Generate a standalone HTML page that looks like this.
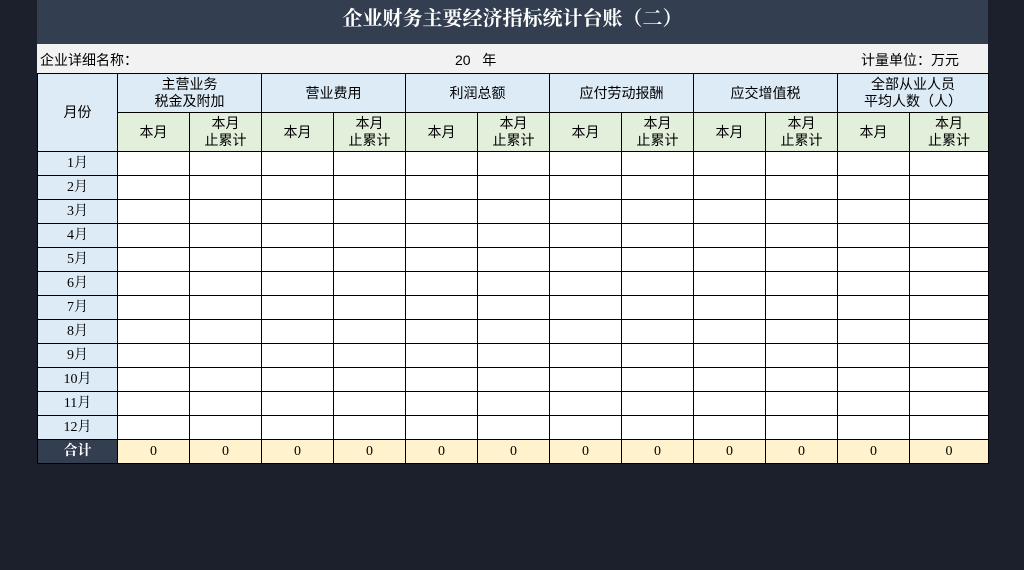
<html><head><style>
body{margin:0;width:1024px;height:570px;background:#1b202c;overflow:hidden;font-family:"Liberation Sans","Noto Sans CJK SC",sans-serif;}
.sheet{position:absolute;left:37px;top:0;width:951px;}
.title{height:44px;background:#333f50;color:#fff;font-family:"Liberation Serif","Noto Serif CJK SC",serif;font-weight:bold;font-size:20px;text-align:center;line-height:38px;}
.info{height:29px;background:#f2f2f2;font-size:14px;position:relative;color:#000;}
.info span{position:absolute;top:6px;}
table{border-collapse:collapse;table-layout:fixed;width:951px;}
td{border:1px solid #000;padding:0;text-align:center;font-size:14px;line-height:17px;color:#000;overflow:hidden;}
.h1{background:#ddebf7;height:39px;}
.h2{background:#e2efda;height:39px;}
.m{background:#ddebf7;font-family:"Liberation Serif","Noto Serif CJK SC",serif;}
tr.d td{height:24px;background:#fff;}
tr.d td.m{background:#ddebf7;}
tr.t td{height:24px;background:#fff2cc;font-family:"Liberation Serif",serif;}
tr.t td.tl{background:#333f50;color:#fff;font-weight:bold;font-family:"Liberation Serif","Noto Serif CJK SC",serif;}
</style></head><body>
<div class="sheet">
<div class="title">企业财务主要经济指标统计台账（二）</div>
<div class="info"><span style="left:3px">企业详细名称：</span><span style="left:418px">20&nbsp;&nbsp;&nbsp;年</span><span style="left:824px">计量单位：万元</span></div>
<table>
<colgroup><col style="width:80px"><col style="width:72px"><col style="width:72px"><col style="width:72px"><col style="width:72px"><col style="width:72px"><col style="width:72px"><col style="width:72px"><col style="width:72px"><col style="width:72px"><col style="width:72px"><col style="width:72px"><col style="width:79px"></colgroup>
<tr><td class="h1" rowspan="2">月份</td><td class="h1" colspan="2">主营业务<br>税金及附加</td><td class="h1" colspan="2">营业费用</td><td class="h1" colspan="2">利润总额</td><td class="h1" colspan="2">应付劳动报酬</td><td class="h1" colspan="2">应交增值税</td><td class="h1" colspan="2">全部从业人员<br>平均人数（人）</td></tr>
<tr><td class="h2">本月</td><td class="h2">本月<br>止累计</td><td class="h2">本月</td><td class="h2">本月<br>止累计</td><td class="h2">本月</td><td class="h2">本月<br>止累计</td><td class="h2">本月</td><td class="h2">本月<br>止累计</td><td class="h2">本月</td><td class="h2">本月<br>止累计</td><td class="h2">本月</td><td class="h2">本月<br>止累计</td></tr>
<tr class="d"><td class="m">1月</td><td></td><td></td><td></td><td></td><td></td><td></td><td></td><td></td><td></td><td></td><td></td><td></td></tr>
<tr class="d"><td class="m">2月</td><td></td><td></td><td></td><td></td><td></td><td></td><td></td><td></td><td></td><td></td><td></td><td></td></tr>
<tr class="d"><td class="m">3月</td><td></td><td></td><td></td><td></td><td></td><td></td><td></td><td></td><td></td><td></td><td></td><td></td></tr>
<tr class="d"><td class="m">4月</td><td></td><td></td><td></td><td></td><td></td><td></td><td></td><td></td><td></td><td></td><td></td><td></td></tr>
<tr class="d"><td class="m">5月</td><td></td><td></td><td></td><td></td><td></td><td></td><td></td><td></td><td></td><td></td><td></td><td></td></tr>
<tr class="d"><td class="m">6月</td><td></td><td></td><td></td><td></td><td></td><td></td><td></td><td></td><td></td><td></td><td></td><td></td></tr>
<tr class="d"><td class="m">7月</td><td></td><td></td><td></td><td></td><td></td><td></td><td></td><td></td><td></td><td></td><td></td><td></td></tr>
<tr class="d"><td class="m">8月</td><td></td><td></td><td></td><td></td><td></td><td></td><td></td><td></td><td></td><td></td><td></td><td></td></tr>
<tr class="d"><td class="m">9月</td><td></td><td></td><td></td><td></td><td></td><td></td><td></td><td></td><td></td><td></td><td></td><td></td></tr>
<tr class="d"><td class="m">10月</td><td></td><td></td><td></td><td></td><td></td><td></td><td></td><td></td><td></td><td></td><td></td><td></td></tr>
<tr class="d"><td class="m">11月</td><td></td><td></td><td></td><td></td><td></td><td></td><td></td><td></td><td></td><td></td><td></td><td></td></tr>
<tr class="d"><td class="m">12月</td><td></td><td></td><td></td><td></td><td></td><td></td><td></td><td></td><td></td><td></td><td></td><td></td></tr>
<tr class="t"><td class="tl">合计</td><td>0</td><td>0</td><td>0</td><td>0</td><td>0</td><td>0</td><td>0</td><td>0</td><td>0</td><td>0</td><td>0</td><td>0</td></tr>
</table>
</div>
</body></html>
